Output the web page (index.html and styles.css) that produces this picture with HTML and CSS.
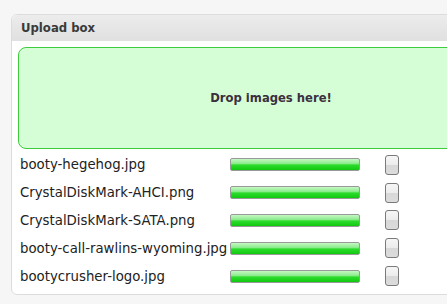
FILE: index.html
```html
<!DOCTYPE html>
<html lang="en">
<head>
    <meta charset="UTF-8">
    <meta name="viewport" content="width=device-width, initial-scale=1.0">
    <title>Upload box</title>
    <link rel="stylesheet" href="styles.css">
</head>
<body>
    <div class="box">
        <div class="box-head">Upload box</div>
        <div class="box-body">
            <div class="dropzone">Drop images here!</div>
            <div class="files">
                <div class="file-row">
                    <span class="file-name">booty-hegehog.jpg</span>
                    <div class="bar"></div>
                    <button class="btn" aria-label="Quitar"></button>
                </div>
                <div class="file-row">
                    <span class="file-name">CrystalDiskMark-AHCI.png</span>
                    <div class="bar"></div>
                    <button class="btn" aria-label="Quitar"></button>
                </div>
                <div class="file-row">
                    <span class="file-name">CrystalDiskMark-SATA.png</span>
                    <div class="bar"></div>
                    <button class="btn" aria-label="Quitar"></button>
                </div>
                <div class="file-row">
                    <span class="file-name">booty-call-rawlins-wyoming.jpg</span>
                    <div class="bar"></div>
                    <button class="btn" aria-label="Quitar"></button>
                </div>
                <div class="file-row">
                    <span class="file-name">bootycrusher-logo.jpg</span>
                    <div class="bar"></div>
                    <button class="btn" aria-label="Quitar"></button>
                </div>
            </div>
        </div>
    </div>
</body>
</html>
```

FILE: styles.css
```css
html {
    overflow: hidden;
}
body {
    font-family: "DejaVu Sans", Verdana, sans-serif;
    margin: 0;
    padding: 14px 0 0 11px;
    background-color: #f6f6f6;
    color: #333;
}
.box {
    width: 512px;
    border: 1px solid #dcdcdc;
    border-radius: 6px;
    background-color: #fff;
}
.box-head {
    height: 26px;
    line-height: 26px;
    padding-left: 9px;
    font-size: 11.7px;
    font-weight: bold;
    color: #3a3a3a;
    background: linear-gradient(#ececec, #e0e0e0);
    border-radius: 6px 6px 0 0;
}
.box-body {
    padding: 6px 0 4px 6px;
}
.dropzone {
    height: 100px;
    display: flex;
    align-items: center;
    justify-content: center;
    border: 1px solid #3ccc3c;
    border-radius: 8px;
    background-color: #d6fed6;
    font-size: 11.6px;
    font-weight: bold;
    color: #3a3040;
}
.files {
    padding: 2px 0 0 2px;
}
.file-row {
    display: grid;
    grid-template-columns: 210px 130px 14px;
    align-items: center;
    height: 27.8px;
    font-size: 13.3px;
    color: #222;
}
.file-name {
    white-space: nowrap;
}
.bar {
    height: 11px;
    border: 1px solid #999;
    border-radius: 2px;
    background: linear-gradient(#c4f7c4, #8fec8f 40%, #2cdc2c 55%, #10c810);
}
.btn {
    width: 14px;
    height: 20px;
    margin-left: 25px;
    padding: 0;
    border: 1px solid #7a7a7a;
    border-radius: 3px;
    background: linear-gradient(#f6f6f6, #ececec 50%, #d8d8d8 52%, #dcdcdc);
}
```
